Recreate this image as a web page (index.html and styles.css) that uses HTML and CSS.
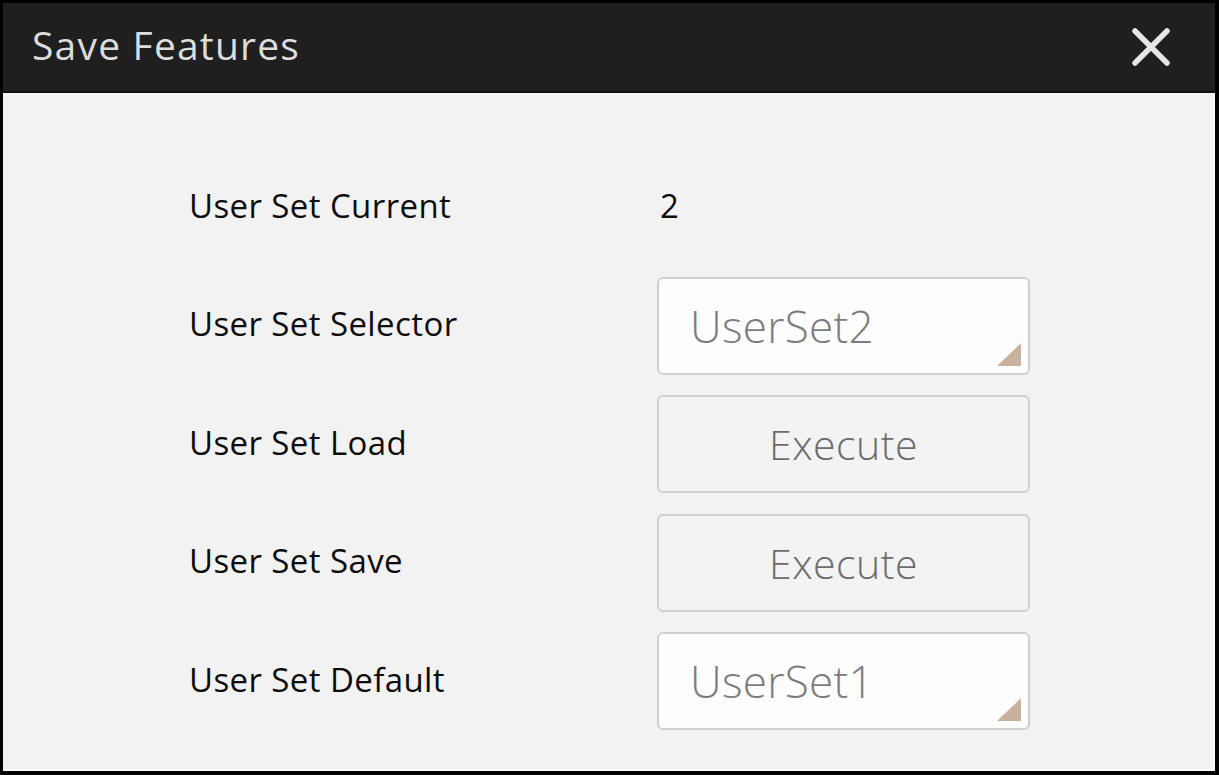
FILE: index.html
```html
<!DOCTYPE html>
<html>
<head>
<meta charset="utf-8">
<link rel="stylesheet" href="styles.css">
</head>
<body>
<div class="dialog">
  <div class="titlebar">
    <span class="title">Save Features</span>
    <svg class="close" width="40" height="40" viewBox="0 0 40 40"><path d="M4 4 L36 36 M36 4 L4 36" stroke="#e6e6e6" stroke-width="5.5" stroke-linecap="round" fill="none"/></svg>
  </div>
  <div class="content">
    <div class="form">
      <div class="label">User Set Current</div>
      <div class="value">2</div>

      <div class="label">User Set Selector</div>
      <div class="combo"><span>UserSet2</span><i class="tri"></i></div>

      <div class="label">User Set Load</div>
      <div class="btn">Execute</div>

      <div class="label">User Set Save</div>
      <div class="btn">Execute</div>

      <div class="label">User Set Default</div>
      <div class="combo"><span>UserSet1</span><i class="tri"></i></div>
    </div>
  </div>
</div>
</body>
</html>
```

FILE: styles.css
```css
html, body {
  margin: 0;
  padding: 0;
  background: #000;
}
.dialog {
  width: 1219px;
  height: 775px;
  box-sizing: border-box;
  border: 3px solid #000;
  border-right-width: 4px;
  border-bottom-width: 4px;
  background: #f2f2f2;
  display: flex;
  flex-direction: column;
  font-family: "Open Sans", "DejaVu Sans", sans-serif;
}
.titlebar {
  height: 88px;
  background: #1f1f1f;
  border-bottom: 2px solid #111;
  display: flex;
  align-items: center;
  justify-content: space-between;
  padding: 0 44px 0 29px;
}
.title {
  color: #dcdcdc;
  font-size: 39px;
  letter-spacing: 1.2px;
  position: relative;
  top: -3px;
}
.close {
  display: block;
}
.content {
  flex: 1;
  border-right: 2px solid #fafafa;
  border-bottom: 2px solid #fafafa;
  padding: 65px 0 0 186px;
}
.form {
  display: grid;
  grid-template-columns: 468px 373px;
  grid-auto-rows: 98px;
  row-gap: 20.5px;
  align-items: center;
}
.label {
  font-size: 33px;
  letter-spacing: 0.4px;
  color: #0d0d0d;
  position: relative;
  top: -2px;
}
.value {
  font-size: 33px;
  color: #0d0d0d;
  padding-left: 3px;
  position: relative;
  top: -2px;
}
.combo, .btn {
  height: 98px;
  box-sizing: border-box;
  border: 2px solid #d0d0d0;
  border-radius: 6px;
  display: flex;
  align-items: center;
  font-weight: 300;
}
.combo {
  background: #fdfdfd;
  color: #7c7c7c;
  padding-left: 31px;
  font-size: 44px;
  letter-spacing: 0.3px;
  position: relative;
}
.btn {
  background: #f3f3f3;
  color: #6c6c6c;
  justify-content: center;
  font-size: 41px;
  letter-spacing: 0.5px;
}
.tri {
  position: absolute;
  right: 7px;
  bottom: 7px;
  width: 0;
  height: 0;
  border-left: 24px solid transparent;
  border-bottom: 23px solid #c9b29d;
}
```
